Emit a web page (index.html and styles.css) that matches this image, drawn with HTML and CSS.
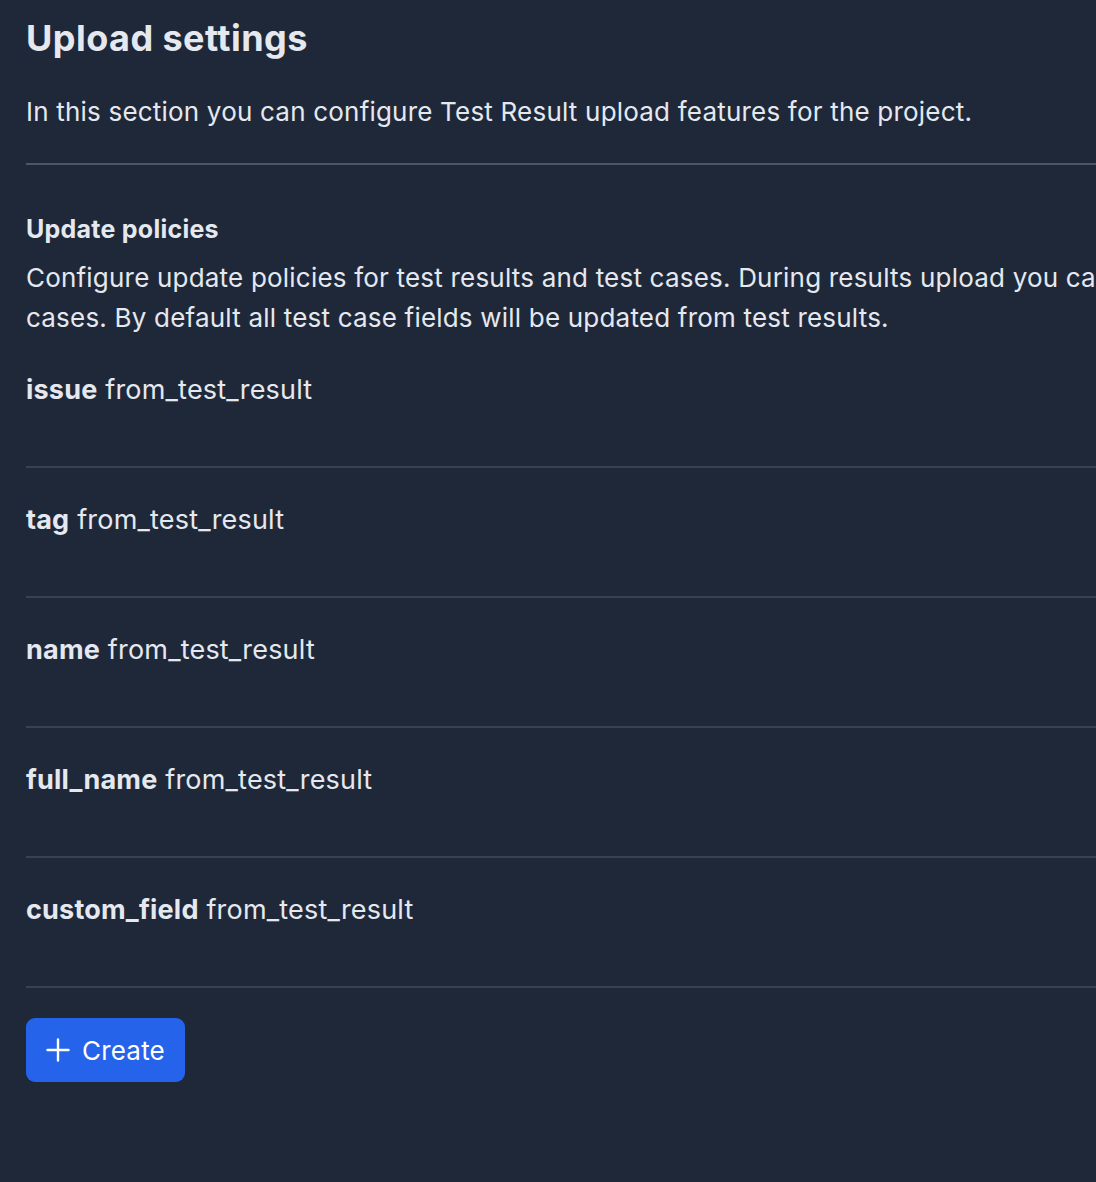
FILE: index.html
```html
<!DOCTYPE html>
<html lang="en">
<head>
<meta charset="utf-8">
<title>Upload settings</title>
<link rel="stylesheet" href="styles.css">
</head>
<body>
<main class="page">
  <h1 class="title">Upload settings</h1>
  <p class="lead">In this section you can configure Test Result upload features for the project.</p>
  <section class="policies">
    <h2 class="section-title">Update policies</h2>
    <p class="section-desc">Configure update policies for test results and test cases. During results upload you can choose which fields will be updated from test results or kept in test<br>cases. By default all test case fields will be updated from test results.</p>
    <ul class="policy-list">
      <li class="policy"><b>issue</b> from_test_result</li>
      <li class="policy"><b>tag</b> from_test_result</li>
      <li class="policy"><b>name</b> from_test_result</li>
      <li class="policy"><b>full_name</b> from_test_result</li>
      <li class="policy"><b>custom_field</b> from_test_result</li>
    </ul>
    <button class="btn-create" type="button">
      <svg class="plus" width="24" height="24" viewBox="0 0 24 24" aria-hidden="true"><path d="M12 1.5v21M1.5 12h21" stroke="currentColor" stroke-width="2.4" stroke-linecap="round" fill="none"/></svg>
      <span>Create</span>
    </button>
  </section>
</main>
</body>
</html>
```

FILE: styles.css
```css
html, body {
  margin: 0;
  padding: 0;
  background: #1f2839;
}
body {
  font-family: Inter, "Noto Sans", "Liberation Sans", sans-serif;
  color: #e5e8ef;
  overflow: hidden;
}
.page {
  width: 1400px;
  padding: 13px 0 0 26px;
}
.title {
  margin: 0;
  font-size: 36px;
  line-height: 50px;
  font-weight: 700;
  letter-spacing: 0.45px;
}
.lead {
  margin: 29px 0 0;
  font-size: 26px;
  line-height: 40px;
  letter-spacing: 0.2px;
  padding-bottom: 31px;
  border-bottom: 2px solid #4b5563;
}
.policies {
  padding-top: 48px;
}
.section-title {
  margin: 0;
  font-size: 25px;
  line-height: 32px;
  font-weight: 700;
  letter-spacing: 0.25px;
}
.section-desc {
  margin: 13px 0 0;
  font-size: 26px;
  line-height: 40px;
  letter-spacing: 0.2px;
  white-space: nowrap;
}
.policy-list {
  list-style: none;
  margin: 0;
  padding: 0;
}
.policy {
  padding-top: 34px;
  height: 94px;
  border-bottom: 2px solid #364152;
  font-size: 27px;
  line-height: 36px;
  letter-spacing: 0.2px;
}
.policy b {
  font-weight: 700;
}
.btn-create {
  margin-top: 30px;
  display: inline-flex;
  align-items: center;
  gap: 12px;
  height: 64px;
  padding: 0 20px;
  border: 0;
  border-radius: 9px;
  background: #2563eb;
  color: #ffffff;
  font-family: inherit;
  font-size: 26px;
  letter-spacing: 0.2px;
  cursor: pointer;
}
.plus {
  display: block;
}
```
